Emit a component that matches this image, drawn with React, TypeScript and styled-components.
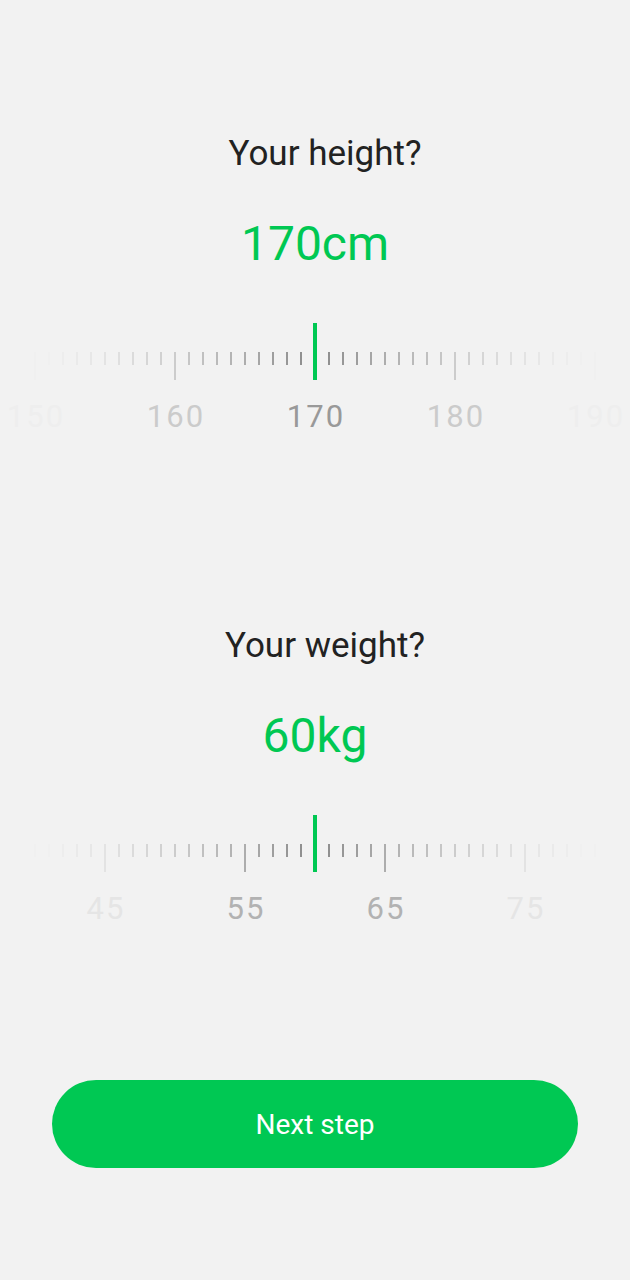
import React from "react";
import styled, { createGlobalStyle } from "styled-components";

const GlobalStyle = createGlobalStyle`
  html, body {
    margin: 0;
    padding: 0;
    background: #f2f2f2;
  }
  body {
    font-family: Roboto, "Liberation Sans", Arial, sans-serif;
    overflow-x: hidden;
  }
`;

const TICK_SPACING = 14;

const labelFade = (d: number) => Math.max(0.04, 1 - d / 245);
const tickFade = (d: number) => Math.max(0.02, Math.pow(Math.max(0, 1 - d / 285), 1.5));

const Page = styled.div`
  width: 630px;
  min-height: 1280px;
  display: flex;
  flex-direction: column;
  align-items: center;
  padding-top: 134px;
  box-sizing: border-box;
  overflow: hidden;
`;

const Section = styled.section`
  width: 630px;
  display: flex;
  flex-direction: column;
  align-items: center;
  & + & {
    margin-top: 189px;
  }
`;

const Title = styled.h2`
  margin: 0;
  padding-left: 20px;
  font-size: 35px;
  line-height: 40px;
  font-weight: 400;
  color: #222222;
`;

const Value = styled.div`
  margin-top: 42px;
  font-size: 48px;
  line-height: 56px;
  font-weight: 400;
  color: #00c853;
`;

const TickRow = styled.div`
  margin-top: 51px;
  height: 57px;
  display: flex;
  justify-content: center;
  width: 630px;
`;

const TickSlot = styled.div`
  width: ${TICK_SPACING}px;
  flex: 0 0 ${TICK_SPACING}px;
  display: flex;
  justify-content: center;
  align-items: flex-start;
`;

const Tick = styled.div<{ $major?: boolean }>`
  width: 2px;
  margin-top: 29px;
  height: ${(p) => (p.$major ? 28 : 13)}px;
  background: #888888;
`;

const Indicator = styled.div`
  width: 4px;
  height: 57px;
  background: #00c853;
`;

const LabelRow = styled.div`
  margin-top: 17px;
  display: flex;
  justify-content: center;
  width: 630px;
`;

const Label = styled.div`
  flex: 0 0 140px;
  width: 140px;
  text-align: center;
  font-size: 31px;
  line-height: 40px;
  letter-spacing: 2px;
  text-indent: 2px;
  color: #999999;
`;

const NextButton = styled.button`
  margin-top: 151px;
  width: 526px;
  height: 88px;
  border: none;
  border-radius: 44px;
  background: #00c853;
  color: #ffffff;
  font-family: Roboto, "Liberation Sans", Arial, sans-serif;
  font-size: 28px;
  font-weight: 400;
  cursor: pointer;
`;

type RulerProps = {
  title: string;
  value: number;
  unit: string;
  majorMod: number;
  labels: number[];
};

const Ruler: React.FC<RulerProps> = ({ title, value, unit, majorMod, labels }) => {
  const ticks: number[] = [];
  for (let i = -20; i <= 20; i++) ticks.push(value + i);
  return (
    <Section>
      <Title>{title}</Title>
      <Value>
        {value}
        {unit}
      </Value>
      <TickRow>
        {ticks.map((v) => {
          const d = Math.abs(v - value) * TICK_SPACING;
          return (
            <TickSlot key={v}>
              {v === value ? (
                <Indicator />
              ) : (
                <Tick $major={v % 10 === majorMod} style={{ opacity: tickFade(d) }} />
              )}
            </TickSlot>
          );
        })}
      </TickRow>
      <LabelRow>
        {labels.map((l) => (
          <Label key={l} style={{ opacity: labelFade(Math.abs(l - value) * TICK_SPACING) }}>
            {l}
          </Label>
        ))}
      </LabelRow>
    </Section>
  );
};

export default function App() {
  return (
    <>
      <GlobalStyle />
      <Page>
        <Ruler title="Your height?" value={170} unit="cm" majorMod={0} labels={[150, 160, 170, 180, 190]} />
        <Ruler title="Your weight?" value={60} unit="kg" majorMod={5} labels={[45, 55, 65, 75]} />
        <NextButton>Next step</NextButton>
      </Page>
    </>
  );
}
